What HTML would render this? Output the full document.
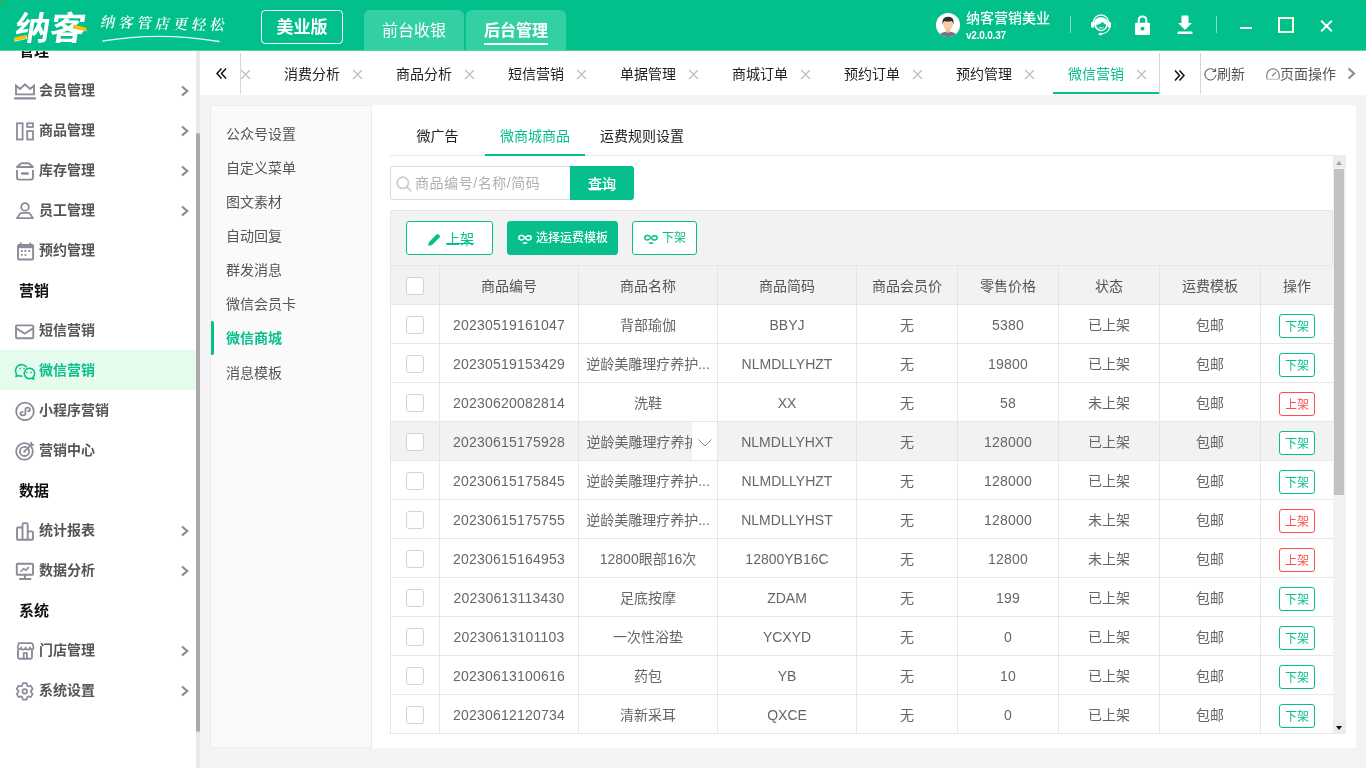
<!DOCTYPE html>
<html lang="zh-CN">
<head>
<meta charset="utf-8">
<title>纳客 - 微信营销</title>
<style>
*{box-sizing:border-box;margin:0;padding:0}
html,body{width:1366px;height:768px;overflow:hidden;background:#f4f4f4;font-family:"Liberation Sans","Noto Sans CJK SC",sans-serif;font-size:14px;color:#333}
.abs{position:absolute}
#app{position:absolute;left:0;top:0;width:1366px;height:768px;will-change:transform}
#hdr{position:absolute;left:0;top:0;width:1366px;height:51px;background:#01c08c;border-bottom:1px solid #58d77c;border-radius:4px 4px 0 0}
.crn{position:absolute;top:0;width:5px;height:5px;background:#7a9803}
#hdr .edition{position:absolute;left:261px;top:10px;width:82px;height:34px;border:1px solid #fff;border-radius:4px;color:#fff;font-weight:bold;font-size:17px;line-height:34px;text-align:center}
#hdr .ht{position:absolute;top:10px;height:40px;width:100px;background:#33d0a3;border-radius:6px 6px 0 0;color:#fff;font-size:16px;line-height:42px;text-align:center}
#hdr .ht.on span{display:inline-block;line-height:25px;border-bottom:2px solid #fff;font-weight:bold;margin-top:8px;vertical-align:top}
#side{position:absolute;left:0;top:51px;width:196px;height:717px;background:#fff;overflow:hidden}
#sbar{position:absolute;left:196px;top:51px;width:4px;height:717px;background:#e9e9e9}
#sbar i{position:absolute;left:0;top:82px;width:4px;height:599px;background:#a9a9a9;border-radius:2px}
.mi{position:absolute;left:0;width:196px;height:40px;line-height:41px;font-size:14px;font-weight:bold;color:#555;padding-left:39px}
.mi svg.ic{position:absolute;left:14px;top:9px;width:22px;height:22px}
.mi .arr{position:absolute;left:180px;top:15px;width:10px;height:12px}
.mi.on{background:#e5fcec;color:#06bf8c}
.mh{position:absolute;left:19px;font-size:15px;font-weight:bold;color:#111;line-height:41px;height:40px}
#tabs{position:absolute;left:200px;top:51px;width:1166px;height:44px;background:#fff}
#tabs .t{position:absolute;top:0;height:44px;line-height:46px;font-size:14px;color:#222;white-space:nowrap}
#tabs .x{position:absolute;top:17.500px;width:11px;height:11px}
#panel{position:absolute;left:211px;top:105px;width:1145px;height:643px;background:#fff}
#sub{position:absolute;left:-1px;top:0;width:162px;height:643px;background:#fafafa;border:1px solid #ececec}
#sub div{position:absolute;left:15px;height:34px;line-height:34px;font-size:14px;color:#555}
#sub div.on{color:#06bf8c;font-weight:bold}
#sub i{position:absolute;left:0;top:215px;width:3px;height:34px;background:#06bf8c;border-radius:0 2px 2px 0}

#tabs .t.on{color:#06bf8c}
#tabs .t.g{color:#555}
#tabs .vl{position:absolute;top:2px;width:1px;height:41px;background:#d8d8d8}
#tabs .ul{position:absolute;left:853px;top:41px;width:106px;height:2px;background:#06bf8c}
#main{position:absolute;left:0;top:0;width:1145px;height:642px}
.stabs{position:absolute;left:179px;top:13px;width:956px;height:38px;border-bottom:1px solid #e6e6e6}
.st{position:absolute;top:0;height:38px;line-height:36px;text-align:center;font-size:14px;color:#222}
.st.on{color:#06bf8c;border-bottom:2px solid #06bf8c;height:38px}
.search{position:absolute;left:179px;top:61px;width:181px;height:34px;border:1px solid #dcdcdc;border-radius:3px 0 0 3px;background:#fff}
.search svg{position:absolute;left:4.500px;top:8.500px;width:16px;height:16px}
.search span{position:absolute;left:24px;top:0;line-height:32px;color:#b0b0b0;font-size:14px;white-space:nowrap;letter-spacing:.55px}
.qbtn{position:absolute;left:359px;top:61px;width:64px;height:34px;background:#06bf8c;color:#fff;border-radius:0 3px 3px 0;text-align:center;line-height:36px;font-size:14px;font-weight:500}
.tool{position:absolute;left:179px;top:105px;width:943px;height:56px;background:#f2f2f2;border:1px solid #e6e6e6;border-bottom:0}
.tb{position:absolute;top:10px;height:34px;border:1px solid #06bf8c;border-radius:3px;background:#fff;color:#06bf8c;font-size:12px;line-height:32px;white-space:nowrap}
.tb svg{position:absolute;left:0;top:0;width:14px;height:10px}
.tb.fill{background:#06bf8c;color:#fff}
.tbl{position:absolute;left:179px;top:160px;width:943px;height:469px;border-left:1px solid #e6e6e6;border-top:1px solid #e6e6e6}
.tr{position:absolute;left:0;width:942px;height:39px}
.td{position:absolute;top:0;height:39px;line-height:40px;text-align:center;border-right:1px solid #e6e6e6;border-bottom:1px solid #e6e6e6;color:#666;font-size:14px;white-space:nowrap;overflow:hidden;background:#fff}
.th .td{background:#f2f2f2;color:#555}
.hv .td{background:#f2f2f2}
.td.n{letter-spacing:.2px}
.cb{position:absolute;left:15px;top:11px;width:18px;height:18px;border:1px solid #d2d2d2;border-radius:3px;background:#fff}
.op{display:inline-block;width:36px;height:24px;line-height:24px;border:1px solid #06bf8c;border-radius:3px;color:#06bf8c;font-size:12px;vertical-align:middle;margin-top:-1px;background:#fff}
.op.r{border-color:#fa5050;color:#fa5050}
.td.tl{text-align:left}
.clip{position:absolute;left:7.500px;top:0;width:105px;overflow:hidden;white-space:nowrap}
.dd{position:absolute;right:0;top:0;width:25px;height:38px;background:#fff}
.dd svg{position:absolute;left:6px;top:17px;width:14px;height:8px}
.vsb{position:absolute;left:1122px;top:50px;width:13px;height:579px;background:#f1f1f1;border-top:13px solid #ececec;border-bottom:12px solid #ececec}
.vsb b{position:absolute;left:1px;top:1px;width:10px;height:326px;background:#c1c1c1}
.vsb s{position:absolute;left:2.800px;width:0;height:0;border:3.700px solid transparent}
.vsb .up{top:-7.500px;border-bottom:4.500px solid #a3a3a3;border-top:0}
.vsb .dn{bottom:-8px;border-top:4.500px solid #111;border-bottom:0}

.logo{position:absolute;left:15px;top:8px;font-size:33px;line-height:42px;font-weight:700;color:#fff;transform:skewX(-9deg) scaleX(1.07);transform-origin:0 50%;letter-spacing:0;font-family:"Liberation Sans","Noto Sans CJK SC",sans-serif}
.ly{position:absolute;background:#fbc107;border-radius:1px}
.slogan{position:absolute;left:101px;top:11px;font-family:"Liberation Serif","Noto Serif CJK SC",serif;font-size:14.500px;font-weight:600;line-height:22px;color:#fff;letter-spacing:3.800px;transform:skewX(-10deg) rotate(1.500deg);transform-origin:0 50%;white-space:nowrap}
.uname{position:absolute;left:966px;top:8px;font-size:14px;line-height:20px;color:#fff;font-weight:500;white-space:nowrap}
.uver{position:absolute;left:966px;top:29px;font-size:10px;line-height:14px;color:#fff;font-weight:bold;white-space:nowrap;letter-spacing:-.2px}
.hv1{position:absolute;top:16px;width:1px;height:17px;background:#7fdfc3}
u{text-underline-offset:-.5px;text-decoration-thickness:1px;text-decoration-skip-ink:none}
</style>
</head>
<body>
<div id="app">
<i class="crn" style="left:0"></i><i class="crn" style="left:1361px"></i>
<div id="hdr">
    <div class="logo">纳客</div>
  <i class="ly" style="left:15px;top:36px;width:11px;height:4px;transform:skewX(-30deg) rotate(-12deg)"></i>
  <i class="ly" style="left:74px;top:26px;width:12px;height:4px;transform:skewX(30deg) rotate(14deg)"></i>
  <div class="slogan">纳客管店更轻松</div>
  <svg class="abs" style="left:100px;top:33px;width:124px;height:10px" viewBox="0 0 124 10" fill="none" stroke="#e9fbf3" stroke-width="1.300" stroke-linecap="round"><path d="M3 8C35 2.500 75 1 119 8.500"/></svg>
  <svg class="abs" style="left:936px;top:13px;width:24px;height:24px" viewBox="0 0 24 24"><defs><clipPath id="avc"><circle cx="12" cy="12" r="12"/></clipPath></defs><circle cx="12" cy="12" r="12" fill="#fff"/><g clip-path="url(#avc)"><path d="M2.500 25c.3-4.200 3.500-6.300 9.500-6.300s9.200 2.100 9.500 6.300z" fill="#74748a"/><path d="M9.800 14.500h4.400v4.300c-1.300 1.200-3.100 1.200-4.400 0z" fill="#eebb96"/><ellipse cx="12" cy="11.300" rx="4.900" ry="5.700" fill="#f7cba4"/><path d="M6.700 11.500C5.600 6.500 8.300 3.700 12 3.800c4.200-.3 6.600 2.700 5.300 7.700-.3-1.900-.9-3-1.800-3.600-2.100.9-4.900.9-6.900.2-1 .6-1.600 1.700-1.900 3.400z" fill="#2f2f2f"/></g></svg>
  <div class="uname">纳客营销美业</div>
  <div class="uver">v2.0.0.37</div>
  <i class="hv1" style="left:1070px"></i>
  <svg class="abs" style="left:1090px;top:13px;width:22px;height:23px" viewBox="0 0 22 23" fill="none"><path d="M3.200 10.500C3.200 5.500 6.500 2 11 2s7.800 3.500 7.800 8.500" stroke="#fff" stroke-width="1.300"/><path d="M4 10.500C4 6.500 7 4.200 11 4.200s7 2.300 7 6.300c0 4.200-3 7.700-7 7.700s-7-3.500-7-7.700z" fill="#fff"/><path d="M6.200 11.800c2.600.3 5-1 6.400-3.200.8 1.700 2 2.700 3.600 3.100-.3 3-2.400 5-5.200 5s-4.600-2-4.800-4.900z" fill="#01c08c"/><path d="M8.600 14.300c1.500.9 3.300.9 4.800 0" stroke="#fff" stroke-width="1"/><rect x="1" y="8.800" width="3.200" height="6" rx="1.500" fill="#fff"/><rect x="17.800" y="8.800" width="3.200" height="6" rx="1.500" fill="#fff"/><path d="M19.600 14.500c-.6 3.600-3.600 5.800-8.400 6.300" stroke="#fff" stroke-width="1.200"/><ellipse cx="10.400" cy="21" rx="1.900" ry="1.300" fill="#fff"/></svg>
  <svg class="abs" style="left:1134px;top:14px;width:17px;height:22px" viewBox="0 0 17 22"><path d="M4.700 9.500V6.300C4.700 4 6.300 2.500 8.500 2.500s3.800 1.500 3.800 3.800v3.200" fill="none" stroke="#fff" stroke-width="2"/><rect x="1" y="8.700" width="15" height="12.300" rx="1.200" fill="#fff"/><circle cx="8.500" cy="14.600" r="1.900" fill="#01c08c"/></svg>
  <svg class="abs" style="left:1176px;top:14px;width:18px;height:22px" viewBox="0 0 18 22" fill="#fff"><path d="M6.200 1.600h5.600c.4 0 .7.300.7.700V9h3.400L9 16 2.100 9h3.400V2.300c0-.4.300-.7.700-.7z"/><rect x="1.500" y="17.400" width="15" height="2.700" rx="1.200"/></svg>
  <i class="hv1" style="left:1216px"></i>
  <i class="abs" style="left:1240px;top:27px;width:12px;height:2px;background:#fff"></i>
  <i class="abs" style="left:1278px;top:17px;width:16px;height:16px;border:2px solid #fbfde0"></i>
  <svg class="abs" style="left:1320px;top:20px;width:13px;height:12px" viewBox="0 0 13 12" stroke="#fff" stroke-width="2" fill="none"><path d="M1.200 .8l10.600 10.400M11.800 .8L1.200 11.200"/></svg>
  <div class="edition">美业版</div>
  <div class="ht" style="left:364px">前台收银</div>
  <div class="ht on" style="left:466px"><span>后台管理</span></div>
</div>
<div id="side">
<div class="mh" style="top:-21px">管理</div>
<div class="mi" style="top:19px"><svg class="ic" viewBox="0 0 22 22" fill="none" stroke="#8b8b9b" stroke-width="1.9"><path d="M2 15.400V6.600L6 10l5-4.800 5 4.800 4-3.400v8.800z" stroke-linejoin="miter"/><path d="M1 19.400h20" stroke-width="2.200" stroke-linecap="round"/></svg>会员管理<svg class="arr" viewBox="0 0 10 12" fill="none" stroke="#8b8b9b" stroke-width="2.300"><path d="M2 1.500l5.200 4.500L2 10.500"/></svg></div>
<div class="mi" style="top:59px"><svg class="ic" viewBox="0 0 22 22" fill="none" stroke="#8b8b9b" stroke-width="1.8"><rect x="3" y="4.300" width="5.600" height="16.200"/><rect x="13.200" y="4.300" width="5.800" height="3.700"/><rect x="13.200" y="12.100" width="5.800" height="8.400"/></svg>商品管理<svg class="arr" viewBox="0 0 10 12" fill="none" stroke="#8b8b9b" stroke-width="2.300"><path d="M2 1.500l5.200 4.500L2 10.500"/></svg></div>
<div class="mi" style="top:99px"><svg class="ic" viewBox="0 0 22 22" fill="none" stroke="#8b8b9b" stroke-width="1.9"><path d="M3 8L6.600 4.800c.5-.4 1-.6 1.600-.6h5.600c.6 0 1.100.2 1.600.6L19 8z" stroke-linejoin="round"/><path d="M3 11v7.600a2 2 0 0 0 2 2h12a2 2 0 0 0 2-2V11"/><path d="M8 14.500h5.800" stroke-width="2.300" stroke-linecap="round"/></svg>库存管理<svg class="arr" viewBox="0 0 10 12" fill="none" stroke="#8b8b9b" stroke-width="2.300"><path d="M2 1.500l5.200 4.500L2 10.500"/></svg></div>
<div class="mi" style="top:139px"><svg class="ic" viewBox="0 0 22 22" fill="none" stroke="#8b8b9b" stroke-width="1.8"><circle cx="11" cy="7.900" r="3.800"/><path d="M3 19.200L6 14.800c.5-.7 1.100-1 2-1h6c.9 0 1.500.3 2 1l3 4.400z" stroke-linejoin="round"/></svg>员工管理<svg class="arr" viewBox="0 0 10 12" fill="none" stroke="#8b8b9b" stroke-width="2.300"><path d="M2 1.500l5.200 4.500L2 10.500"/></svg></div>
<div class="mi" style="top:179px"><svg class="ic" viewBox="0 0 22 22" fill="none" stroke="#8b8b9b" stroke-width="1.9"><rect x="4" y="6" width="15.100" height="14.500" rx="1"/><path d="M4 7.600h15.100" stroke-width="3.200"/><path d="M6.800 3.600v3M16.300 3.600v3" stroke-width="1.800"/><path d="M6.900 12h1.800M10.500 12h1.800M14.400 12h1.800M6.900 15.800h1.800M10.500 15.800h1.800" stroke-width="1.800"/></svg>预约管理</div>
<div class="mh" style="top:219px">营销</div>
<div class="mi" style="top:259px"><svg class="ic" viewBox="0 0 22 22" fill="none" stroke="#8b8b9b" stroke-width="1.9"><rect x="2" y="6.400" width="17.300" height="12.800" rx="1"/><path d="M2.400 9.400l8.300 5.300 8.300-5.300"/></svg>短信营销</div>
<div class="mi on" style="top:299px"><svg class="ic" viewBox="0 0 22 22" fill="none" stroke="#06bf8c" stroke-width="1.600"><path d="M2.600 15.300A5.800 5.800 0 1 1 12.800 8.300"/><path d="M2.600 15.300L2 17.400l2.400-.9c1.300.6 2.700.8 4 .5" stroke-linejoin="round"/><path d="M18.900 18.300a5.200 5.200 0 1 0-3.800 1.300c.8 0 1.500-.1 2.200-.4l2.500.9z" stroke-linejoin="round"/><path d="M5.300 9.400h1.500M9.300 9.400h1.500M12 13.400h1.500M16.200 13.400h1.500" stroke-width="1.500"/></svg>微信营销</div>
<div class="mi" style="top:339px"><svg class="ic" viewBox="0 0 22 22" fill="none" stroke="#8b8b9b" stroke-width="1.8"><circle cx="11" cy="12.400" r="8.800"/><path d="M13.900 12.100c1.200 0 2.100-.8 2.100-1.700s-1-1.700-2.200-1.700-2.400.9-2.400 2.200v3.300c0 1.200-1.200 2.100-2.500 2.100s-2.500-.8-2.500-1.700.9-1.700 2.200-1.700" stroke-linecap="round"/></svg>小程序营销</div>
<div class="mi" style="top:379px"><svg class="ic" viewBox="0 0 22 22" fill="none" stroke="#8b8b9b" stroke-width="1.8"><circle cx="10.500" cy="12.400" r="8.300"/><circle cx="10.500" cy="12.400" r="4.600"/><circle cx="10.500" cy="12.400" r="1.200" fill="#8b8b9b" stroke="none"/><path d="M10.500 12.400l7.800-7.800M17.200 3v2.800H20" stroke-width="1.700"/></svg>营销中心</div>
<div class="mh" style="top:419px">数据</div>
<div class="mi" style="top:459px"><svg class="ic" viewBox="0 0 22 22" fill="none" stroke="#8b8b9b" stroke-width="1.9"><path d="M8.500 8.500H4a1 1 0 0 0-1 1v10.200a1 1 0 0 0 1 1h14a1 1 0 0 0 1-1v-6.300a1 1 0 0 0-1-1h-4.300M8.500 20.700V5.600a1.500 1.500 0 0 1 1.500-1.500h2.200a1.500 1.500 0 0 1 1.500 1.500v15.100"/></svg>统计报表<svg class="arr" viewBox="0 0 10 12" fill="none" stroke="#8b8b9b" stroke-width="2.300"><path d="M2 1.500l5.200 4.500L2 10.500"/></svg></div>
<div class="mi" style="top:499px"><svg class="ic" viewBox="0 0 22 22" fill="none" stroke="#8b8b9b" stroke-width="1.9"><rect x="2.800" y="4.700" width="16.200" height="11" rx=".8"/><path d="M10.900 15.700v4" /><path d="M5.900 20h10.500" stroke-width="2.100" stroke-linecap="round"/><path d="M6.500 12.800l3.100-3.100 2.400 1.500 2.800-3.100" stroke-width="1.600"/></svg>数据分析<svg class="arr" viewBox="0 0 10 12" fill="none" stroke="#8b8b9b" stroke-width="2.300"><path d="M2 1.500l5.200 4.500L2 10.500"/></svg></div>
<div class="mh" style="top:539px">系统</div>
<div class="mi" style="top:579px"><svg class="ic" viewBox="0 0 22 22" fill="none" stroke="#8b8b9b" stroke-width="1.9"><path d="M4.600 4.100h12.800c.6 0 1 .3 1.200.9l.9 3.400a1.750 1.750 0 0 1-3.500 0 2.200 2.200 0 0 1-4.400 0 2.200 2.200 0 0 1-4.400 0 1.750 1.750 0 0 1-3.500 0l.9-3.400c.2-.6.600-.9 1.200-.9z" stroke-linejoin="round" stroke-width="1.700"/><path d="M4 10.500v7.700a1.500 1.500 0 0 0 1.500 1.500h11a1.500 1.500 0 0 0 1.500-1.500v-7.700"/><path d="M9.700 19.700v-5.500h3.200v5.500" stroke-width="1.800"/></svg>门店管理<svg class="arr" viewBox="0 0 10 12" fill="none" stroke="#8b8b9b" stroke-width="2.300"><path d="M2 1.500l5.200 4.500L2 10.500"/></svg></div>
<div class="mi" style="top:619px"><svg class="ic" viewBox="0 0 22 22" fill="none" stroke="#8b8b9b" stroke-width="1.7"><path d="M13.2 6.7 L12.6 4.2 L8.8 4.2 L8.2 6.7 L7.1 7.4 L4.6 6.7 L2.7 9.9 L4.5 11.8 L4.5 13.0 L2.7 14.9 L4.6 18.1 L7.1 17.4 L8.2 18.1 L8.8 20.6 L12.6 20.6 L13.2 18.1 L14.3 17.4 L16.8 18.1 L18.7 14.9 L16.9 13.0 L16.9 11.8 L18.7 9.9 L16.8 6.7 L14.3 7.4Z" stroke-linejoin="round"/><circle cx="10.7" cy="12.4" r="2.300"/></svg>系统设置<svg class="arr" viewBox="0 0 10 12" fill="none" stroke="#8b8b9b" stroke-width="2.300"><path d="M2 1.500l5.200 4.500L2 10.500"/></svg></div>
</div>
<div id="sbar"><i></i></div>
<div id="tabs">
<svg class="abs" style="left:16px;top:16.500px;width:11px;height:11px" viewBox="0 0 11 11" fill="none" stroke="#111" stroke-width="1.5"><path d="M5.500 .5L1 5.500l4.500 5M10 .5L5.500 5.500l4.500 5"/></svg>
<i class="vl" style="left:40px"></i>
<svg class="x" style="left:39.5px" viewBox="0 0 11 11" stroke="#bdbdbd" stroke-width="1.200" fill="none"><path d="M1 1l9 9M10 1l-9 9"/></svg>
<div class="t" style="left:84px">消费分析</div><svg class="x" style="left:151.5px" viewBox="0 0 11 11" stroke="#bdbdbd" stroke-width="1.200" fill="none"><path d="M1 1l9 9M10 1l-9 9"/></svg>
<div class="t" style="left:196px">商品分析</div><svg class="x" style="left:263.5px" viewBox="0 0 11 11" stroke="#bdbdbd" stroke-width="1.200" fill="none"><path d="M1 1l9 9M10 1l-9 9"/></svg>
<div class="t" style="left:308px">短信营销</div><svg class="x" style="left:375.5px" viewBox="0 0 11 11" stroke="#bdbdbd" stroke-width="1.200" fill="none"><path d="M1 1l9 9M10 1l-9 9"/></svg>
<div class="t" style="left:420px">单据管理</div><svg class="x" style="left:487.5px" viewBox="0 0 11 11" stroke="#bdbdbd" stroke-width="1.200" fill="none"><path d="M1 1l9 9M10 1l-9 9"/></svg>
<div class="t" style="left:532px">商城订单</div><svg class="x" style="left:599.5px" viewBox="0 0 11 11" stroke="#bdbdbd" stroke-width="1.200" fill="none"><path d="M1 1l9 9M10 1l-9 9"/></svg>
<div class="t" style="left:644px">预约订单</div><svg class="x" style="left:711.5px" viewBox="0 0 11 11" stroke="#bdbdbd" stroke-width="1.200" fill="none"><path d="M1 1l9 9M10 1l-9 9"/></svg>
<div class="t" style="left:756px">预约管理</div><svg class="x" style="left:823.5px" viewBox="0 0 11 11" stroke="#bdbdbd" stroke-width="1.200" fill="none"><path d="M1 1l9 9M10 1l-9 9"/></svg>
<div class="t on" style="left:868px">微信营销</div><svg class="x" style="left:935.5px" viewBox="0 0 11 11" stroke="#bdbdbd" stroke-width="1.200" fill="none"><path d="M1 1l9 9M10 1l-9 9"/></svg>
<i class="ul"></i>
<i class="vl" style="left:959px"></i>
<svg class="abs" style="left:974px;top:18.500px;width:11px;height:11px" viewBox="0 0 11 11" fill="none" stroke="#111" stroke-width="1.500"><path d="M1 .5L5.500 5.500 1 10.500M5.500 .5L10 5.500l-4.500 5"/></svg>
<i class="vl" style="left:1000px"></i>
<svg class="abs" style="left:1003.500px;top:16px;width:13px;height:14px" viewBox="0 0 13 14" fill="none" stroke="#666" stroke-width="1.100"><path d="M11.300 4.400A5.600 5.600 0 1 0 12.100 7.800"/><path d="M8.300 4.500h3.300V1.300" stroke-width="1.100"/></svg>
<div class="t g" style="left:1017px">刷新</div>
<svg class="abs" style="left:1066px;top:17px;width:14px;height:12px" viewBox="0 0 14 12" fill="none" stroke="#777" stroke-width="1.100"><path d="M1.200 11.200C-.5 6 2.500.8 7 .8s7.500 5.200 5.800 10.400"/><path d="M1 11.300h12" stroke="#c8c8c8" stroke-width="1.300"/><path d="M6 8.200l3.800-3.900" stroke-width="1.200"/></svg>
<div class="t g" style="left:1080px">页面操作</div>
<svg class="abs" style="left:1147px;top:16px;width:9px;height:13px" viewBox="0 0 9 13" fill="none" stroke="#8b8b9b" stroke-width="2.200"><path d="M1.500 1.500l5.500 5-5.500 5"/></svg>
</div>
<div id="panel">
  <div id="sub">
    <i></i>
    <div style="top:11px">公众号设置</div>
    <div style="top:45px">自定义菜单</div>
    <div style="top:79px">图文素材</div>
    <div style="top:113px">自动回复</div>
    <div style="top:147px">群发消息</div>
    <div style="top:181px">微信会员卡</div>
    <div class="on" style="top:215px">微信商城</div>
    <div style="top:250px">消息模板</div>
  </div>
  <div id="main">
<div class="stabs"><div class="st" style="left:0;width:95px">微广告</div><div class="st on" style="left:95px;width:100px">微商城商品</div><div class="st" style="left:195px;width:114px">运费规则设置</div></div>
<div class="search"><svg viewBox="0 0 16 16" fill="none" stroke="#cbcbcb" stroke-width="1.700"><circle cx="6.800" cy="6.800" r="5.700"/><path d="M10.900 10.900l4.300 4.300"/></svg><span>商品编号/名称/简码</span></div><div class="qbtn"><u>查询</u></div>
<div class="tool"><div class="tb" style="left:15px;width:87px;font-size:14px;line-height:35px"><svg style="width:14px;height:14px;left:20px;top:10.500px" viewBox="0 0 14 14" fill="#06bf8c"><path d="M1 13l1-4L9.800 1.200c.4-.4 1-.4 1.400 0l1.600 1.600c.4.400.4 1 0 1.400L5 12z"/></svg><u style="position:absolute;left:39px">上架</u></div><div class="tb fill" style="left:116px;width:111px"><span style="position:absolute;left:10px;top:12px;width:14px;height:10px"><svg viewBox="0 0 14 10" fill="none" stroke="#fff" stroke-width="1.500" stroke-linecap="round"><path d="M5.800 4.800C4.800 6.300 .8 6.600.8 3.800S4.800 1 6 2.600L8 5c1.200 1.600 5.200 1.400 5.200-1.200S9.200 1.200 8.200 2.800"/><path d="M5.300 9h3.400" stroke-width="1.300"/></svg></span><b style="position:absolute;left:28px;font-weight:500">选择运费模板</b></div><div class="tb" style="left:241px;width:65px"><span style="position:absolute;left:11px;top:12px;width:14px;height:10px"><svg viewBox="0 0 14 10" fill="none" stroke="#06bf8c" stroke-width="1.500" stroke-linecap="round"><path d="M5.800 4.800C4.800 6.300 .8 6.600.8 3.800S4.800 1 6 2.600L8 5c1.200 1.600 5.200 1.400 5.200-1.200S9.200 1.200 8.200 2.800"/><path d="M5.300 9h3.400" stroke-width="1.300"/></svg></span><span style="position:absolute;left:29px">下架</span></div></div>
<div class="tbl">
<div class="tr th" style="top:0">
<div class="td" style="left:0px;width:49px"><i class="cb"></i></div>
<div class="td" style="left:49px;width:139px">商品编号</div>
<div class="td" style="left:188px;width:139px">商品名称</div>
<div class="td" style="left:327px;width:139px">商品简码</div>
<div class="td" style="left:466px;width:101px">商品会员价</div>
<div class="td" style="left:567px;width:101px">零售价格</div>
<div class="td" style="left:668px;width:101px">状态</div>
<div class="td" style="left:769px;width:101px">运费模板</div>
<div class="td" style="left:870px;width:73px">操作</div>
</div>
<div class="tr" style="top:39px">
<div class="td" style="left:0px;width:49px"><i class="cb"></i></div>
<div class="td n" style="left:49px;width:139px">20230519161047</div>
<div class="td" style="left:188px;width:139px">背部瑜伽</div>
<div class="td" style="left:327px;width:139px">BBYJ</div>
<div class="td" style="left:466px;width:101px">无</div>
<div class="td n" style="left:567px;width:101px">5380</div>
<div class="td" style="left:668px;width:101px">已上架</div>
<div class="td" style="left:769px;width:101px">包邮</div>
<div class="td" style="left:870px;width:73px"><span class="op">下架</span></div>
</div>
<div class="tr" style="top:78px">
<div class="td" style="left:0px;width:49px"><i class="cb"></i></div>
<div class="td n" style="left:49px;width:139px">20230519153429</div>
<div class="td" style="left:188px;width:139px">逆龄美雕理疗养护...</div>
<div class="td" style="left:327px;width:139px">NLMDLLYHZT</div>
<div class="td" style="left:466px;width:101px">无</div>
<div class="td n" style="left:567px;width:101px">19800</div>
<div class="td" style="left:668px;width:101px">已上架</div>
<div class="td" style="left:769px;width:101px">包邮</div>
<div class="td" style="left:870px;width:73px"><span class="op">下架</span></div>
</div>
<div class="tr" style="top:117px">
<div class="td" style="left:0px;width:49px"><i class="cb"></i></div>
<div class="td n" style="left:49px;width:139px">20230620082814</div>
<div class="td" style="left:188px;width:139px">洗鞋</div>
<div class="td" style="left:327px;width:139px">XX</div>
<div class="td" style="left:466px;width:101px">无</div>
<div class="td n" style="left:567px;width:101px">58</div>
<div class="td" style="left:668px;width:101px">未上架</div>
<div class="td" style="left:769px;width:101px">包邮</div>
<div class="td" style="left:870px;width:73px"><span class="op r">上架</span></div>
</div>
<div class="tr hv" style="top:156px">
<div class="td" style="left:0px;width:49px"><i class="cb"></i></div>
<div class="td n" style="left:49px;width:139px">20230615175928</div>
<div class="td tl" style="left:188px;width:139px"><span class="clip">逆龄美雕理疗养护</span><span class="dd"><svg viewBox="0 0 14 8" fill="none" stroke="#888" stroke-width="1"><path d="M.5 .5L7 7 13.500 .5"/></svg></span></div>
<div class="td" style="left:327px;width:139px">NLMDLLYHXT</div>
<div class="td" style="left:466px;width:101px">无</div>
<div class="td n" style="left:567px;width:101px">128000</div>
<div class="td" style="left:668px;width:101px">已上架</div>
<div class="td" style="left:769px;width:101px">包邮</div>
<div class="td" style="left:870px;width:73px"><span class="op">下架</span></div>
</div>
<div class="tr" style="top:195px">
<div class="td" style="left:0px;width:49px"><i class="cb"></i></div>
<div class="td n" style="left:49px;width:139px">20230615175845</div>
<div class="td" style="left:188px;width:139px">逆龄美雕理疗养护...</div>
<div class="td" style="left:327px;width:139px">NLMDLLYHZT</div>
<div class="td" style="left:466px;width:101px">无</div>
<div class="td n" style="left:567px;width:101px">128000</div>
<div class="td" style="left:668px;width:101px">已上架</div>
<div class="td" style="left:769px;width:101px">包邮</div>
<div class="td" style="left:870px;width:73px"><span class="op">下架</span></div>
</div>
<div class="tr" style="top:234px">
<div class="td" style="left:0px;width:49px"><i class="cb"></i></div>
<div class="td n" style="left:49px;width:139px">20230615175755</div>
<div class="td" style="left:188px;width:139px">逆龄美雕理疗养护...</div>
<div class="td" style="left:327px;width:139px">NLMDLLYHST</div>
<div class="td" style="left:466px;width:101px">无</div>
<div class="td n" style="left:567px;width:101px">128000</div>
<div class="td" style="left:668px;width:101px">未上架</div>
<div class="td" style="left:769px;width:101px">包邮</div>
<div class="td" style="left:870px;width:73px"><span class="op r">上架</span></div>
</div>
<div class="tr" style="top:273px">
<div class="td" style="left:0px;width:49px"><i class="cb"></i></div>
<div class="td n" style="left:49px;width:139px">20230615164953</div>
<div class="td" style="left:188px;width:139px">12800眼部16次</div>
<div class="td" style="left:327px;width:139px">12800YB16C</div>
<div class="td" style="left:466px;width:101px">无</div>
<div class="td n" style="left:567px;width:101px">12800</div>
<div class="td" style="left:668px;width:101px">未上架</div>
<div class="td" style="left:769px;width:101px">包邮</div>
<div class="td" style="left:870px;width:73px"><span class="op r">上架</span></div>
</div>
<div class="tr" style="top:312px">
<div class="td" style="left:0px;width:49px"><i class="cb"></i></div>
<div class="td n" style="left:49px;width:139px">20230613113430</div>
<div class="td" style="left:188px;width:139px">足底按摩</div>
<div class="td" style="left:327px;width:139px">ZDAM</div>
<div class="td" style="left:466px;width:101px">无</div>
<div class="td n" style="left:567px;width:101px">199</div>
<div class="td" style="left:668px;width:101px">已上架</div>
<div class="td" style="left:769px;width:101px">包邮</div>
<div class="td" style="left:870px;width:73px"><span class="op">下架</span></div>
</div>
<div class="tr" style="top:351px">
<div class="td" style="left:0px;width:49px"><i class="cb"></i></div>
<div class="td n" style="left:49px;width:139px">20230613101103</div>
<div class="td" style="left:188px;width:139px">一次性浴垫</div>
<div class="td" style="left:327px;width:139px">YCXYD</div>
<div class="td" style="left:466px;width:101px">无</div>
<div class="td n" style="left:567px;width:101px">0</div>
<div class="td" style="left:668px;width:101px">已上架</div>
<div class="td" style="left:769px;width:101px">包邮</div>
<div class="td" style="left:870px;width:73px"><span class="op">下架</span></div>
</div>
<div class="tr" style="top:390px">
<div class="td" style="left:0px;width:49px"><i class="cb"></i></div>
<div class="td n" style="left:49px;width:139px">20230613100616</div>
<div class="td" style="left:188px;width:139px">药包</div>
<div class="td" style="left:327px;width:139px">YB</div>
<div class="td" style="left:466px;width:101px">无</div>
<div class="td n" style="left:567px;width:101px">10</div>
<div class="td" style="left:668px;width:101px">已上架</div>
<div class="td" style="left:769px;width:101px">包邮</div>
<div class="td" style="left:870px;width:73px"><span class="op">下架</span></div>
</div>
<div class="tr" style="top:429px">
<div class="td" style="left:0px;width:49px"><i class="cb"></i></div>
<div class="td n" style="left:49px;width:139px">20230612120734</div>
<div class="td" style="left:188px;width:139px">清新采耳</div>
<div class="td" style="left:327px;width:139px">QXCE</div>
<div class="td" style="left:466px;width:101px">无</div>
<div class="td n" style="left:567px;width:101px">0</div>
<div class="td" style="left:668px;width:101px">已上架</div>
<div class="td" style="left:769px;width:101px">包邮</div>
<div class="td" style="left:870px;width:73px"><span class="op">下架</span></div>
</div>
</div>
<div class="vsb"><b></b><s class="up"></s><s class="dn"></s></div>
</div>
</div>
</div>
</body>
</html>
